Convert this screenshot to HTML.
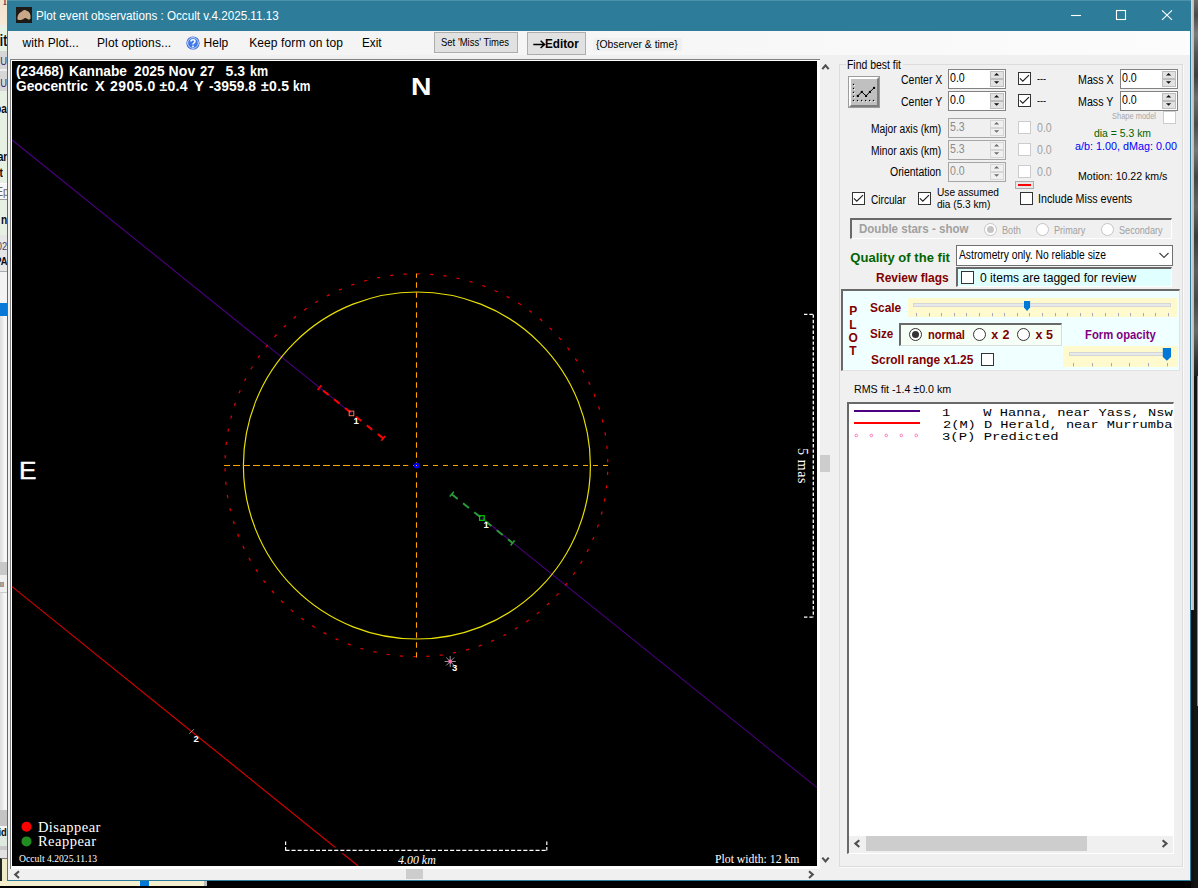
<!DOCTYPE html>
<html><head><meta charset="utf-8"><title>Plot event observations</title>
<style>
html,body{margin:0;padding:0}
body{width:1198px;height:888px;position:relative;overflow:hidden;background:#f0f0f0;font-family:"Liberation Sans",sans-serif}
body>div,body>span,body>svg{position:absolute;box-sizing:border-box}
.t{white-space:pre}

.cb{background:#fff;border:1px solid #333}
.cbd{background:#fff;border:1px solid #ccc}
.sunk{border-style:solid;border-width:2px 1px 1px 2px;border-color:#696969 #fff #fff #696969}
.spin{background:#fff;border:1px solid #7a7a7a}
.spind{background:#f0f0f0;border:1px solid #ababab}
</style></head>
<body>
<div style="left:0px;top:0px;width:7px;height:26px;background:linear-gradient(180deg,#f3e2cc,#f4ead8);"></div>
<div style="left:0px;top:25px;width:7px;height:2px;background:#ececec;"></div>
<div style="left:0px;top:27px;width:7px;height:24px;background:#e6f2e4;"></div>
<div style="left:0px;top:51px;width:7px;height:18px;background:#d6d6d6;"></div>
<div style="left:0px;top:69px;width:7px;height:2px;background:#eee;"></div>
<div style="left:0px;top:71px;width:7px;height:20px;background:#d6d6d6;"></div>
<div style="left:0px;top:91px;width:7px;height:92px;background:#e6f1e4;"></div>
<div style="left:0px;top:183px;width:7px;height:17px;background:#f6f6f6;border-top:1px solid #fff;border-bottom:1px solid #999;"></div>
<div style="left:0px;top:200px;width:7px;height:35px;background:#e6f1e4;"></div>
<div style="left:0px;top:235px;width:7px;height:37px;background:#e6e6e6;border-bottom:1px solid #aaa;"></div>
<div style="left:0px;top:272px;width:7px;height:31px;background:#f3f3f3;"></div>
<div style="left:0px;top:303px;width:7px;height:13px;background:#0a78d7;"></div>
<div style="left:0px;top:316px;width:7px;height:246px;background:linear-gradient(90deg,#dedede 0,#e6e6e6 30%,#f6f6f6 60%);"></div>
<div style="left:0px;top:562px;width:7px;height:13px;background:#c8c8c8;"></div>
<div style="left:0px;top:575px;width:7px;height:18px;background:#efefef;border-bottom:1px solid #ccc;"></div>
<div style="left:0px;top:593px;width:7px;height:217px;background:linear-gradient(90deg,#dedede 0,#e6e6e6 30%,#f6f6f6 60%);"></div>
<div style="left:0px;top:810px;width:7px;height:16px;background:#c4c4c4;"></div>
<div style="left:0px;top:826px;width:7px;height:3px;background:#f4f4f4;"></div>
<div style="left:0px;top:829px;width:7px;height:17px;background:#dfeadf;"></div>
<div style="left:0px;top:846px;width:7px;height:4px;background:#c8c8c8;"></div>
<div style="left:0px;top:850px;width:7px;height:8px;background:#e2e2e2;"></div>
<div style="left:0px;top:858px;width:7px;height:30px;background:#efebc9;border-left:2px solid #222;border-top:1px solid #777;"></div>
<div style="left:0;top:-6.4px;width:7px;height:13px;overflow:hidden"><span style='position:absolute;right:0px;top:0;white-space:pre;font:13px/1 "Liberation Serif", serif;color:#1a1a3a;transform-origin:100% 0;transform:scaleX(0.85)'>1</span></div>
<div style="left:0;top:31.6px;width:7px;height:16.5px;overflow:hidden"><span style='position:absolute;right:0px;top:0;white-space:pre;font:bold 16.5px/1 "Liberation Sans", sans-serif;color:#0a0a14;transform-origin:100% 0;transform:scaleX(0.72)'>it</span></div>
<div style="left:0;top:55.9px;width:7px;height:11px;overflow:hidden"><span style='position:absolute;right:0px;top:0;white-space:pre;font:11px/1 "Liberation Sans", sans-serif;color:#2a2a7a;transform-origin:100% 0;transform:scaleX(0.85)'>U</span></div>
<div style="left:0;top:77.9px;width:7px;height:11px;overflow:hidden"><span style='position:absolute;right:0px;top:0;white-space:pre;font:11px/1 "Liberation Sans", sans-serif;color:#2a2a7a;transform-origin:100% 0;transform:scaleX(0.85)'>U</span></div>
<div style="left:0;top:103.1px;width:7px;height:12px;overflow:hidden"><span style='position:absolute;right:0px;top:0;white-space:pre;font:bold 12px/1 "Liberation Sans", sans-serif;color:#0a0a14;transform-origin:100% 0;transform:scaleX(0.85)'>pa</span></div>
<div style="left:0;top:151.3px;width:7px;height:12px;overflow:hidden"><span style='position:absolute;right:0px;top:0;white-space:pre;font:bold 12px/1 "Liberation Sans", sans-serif;color:#0a0a14;transform-origin:100% 0;transform:scaleX(0.85)'>ar</span></div>
<div style="left:0;top:167.4px;width:7px;height:12px;overflow:hidden"><span style='position:absolute;right:4px;top:0;white-space:pre;font:bold 12px/1 "Liberation Sans", sans-serif;color:#2a0a00;transform-origin:100% 0;transform:scaleX(0.85)'>t</span></div>
<div style="left:0;top:185.8px;width:7px;height:12px;overflow:hidden"><span style='position:absolute;right:-2px;top:0;white-space:pre;font:12px/1 "Liberation Sans", sans-serif;color:#666;transform-origin:100% 0;transform:scaleX(0.85)'>Ep</span></div>
<div style="left:0;top:213.8px;width:7px;height:12px;overflow:hidden"><span style='position:absolute;right:0px;top:0;white-space:pre;font:bold 12px/1 "Liberation Sans", sans-serif;color:#0a0a14;transform-origin:100% 0;transform:scaleX(0.85)'>n</span></div>
<div style="left:0;top:240.9px;width:7px;height:11px;overflow:hidden"><span style='position:absolute;right:0px;top:0;white-space:pre;font:11px/1 "Liberation Sans", sans-serif;color:#445;transform-origin:100% 0;transform:scaleX(0.85)'>02</span></div>
<div style="left:0;top:255.9px;width:7px;height:11px;overflow:hidden"><span style='position:absolute;right:0px;top:0;white-space:pre;font:bold 11px/1 "Liberation Sans", sans-serif;color:#0a0a14;transform-origin:100% 0;transform:scaleX(0.85)'>PA</span></div>
<div style="left:0;top:826.7px;width:7px;height:11px;overflow:hidden"><span style='position:absolute;right:0px;top:0;white-space:pre;font:bold 11px/1 "Liberation Sans", sans-serif;color:#0a0a14;transform-origin:100% 0;transform:scaleX(0.85)'>id</span></div>
<div style="left:0px;top:582px;width:4px;height:5px;background:#c9a070;border:1px solid #999;"></div>
<div style="left:0px;top:881px;width:1198px;height:7px;background:#000;"></div>
<div style="left:0px;top:881px;width:204px;height:5px;background:#f3efcf;"></div>
<div style="left:140px;top:881px;width:9px;height:5px;background:#0078d7;"></div>
<div style="left:204px;top:881px;width:3px;height:5px;background:#bbb;"></div>
<div style="left:1191px;top:0px;width:3px;height:610px;background:linear-gradient(90deg,#d8d8d8,#b8b8b8);"></div>
<div style="left:1191px;top:610px;width:3px;height:278px;background:#101010;"></div>
<div style="left:1194px;top:0px;width:4px;height:376px;background:linear-gradient(180deg,#6a6a6a 0,#4a4a4a 4%,#7c7c7c 9%,#555 14%,#3e3e3e 20%,#6e6e6e 26%,#4c4c4c 33%,#777 40%,#444 47%,#666 55%,#3c3c3c 63%,#5e5e5e 72%,#484848 80%,#6a6a6a 88%,#333 96%,#222 100%);"></div>
<div style="left:1194px;top:376px;width:4px;height:512px;background:#141414;"></div>
<div style="left:1197px;top:376px;width:1px;height:330px;background:#8a8a8a;"></div>
<div style="left:7px;top:0px;width:1184px;height:881px;background:#f0f0f0;border:1px solid #2d7d9a;border-top:none;"></div>
<div style="left:7px;top:0px;width:1184px;height:31px;background:#2d7d9a;"></div>
<div style="left:7px;top:0px;width:1184px;height:1px;background:#4b91aa;"></div>
<svg style="left:16px;top:7px" width="16" height="16" viewBox="0 0 16 16"><rect width="16" height="16" fill="#1e1a17"/><path d="M1.5 12.5 C1 9 3 5.5 6 4.5 C7 3 9.5 2.5 11 4 C13.5 4.5 15 7.5 14.5 11 C14.5 12.5 13 13 11.5 12 C10 11 9 10.5 8 11.5 C6.5 13 4 13.5 1.5 12.5Z" fill="#c9a888"/></svg>
<span class="t" style='left:36.03px;top:9.64px;font:12px/1 "Liberation Sans", sans-serif;color:#fff;transform-origin:0 0;transform:scaleX(0.9719);'>Plot event observations : Occult v.4.2025.11.13</span>
<svg style="left:1060px;top:0" width="130" height="31" viewBox="1060 0 130 31" fill="none" stroke="#fff" stroke-width="1.1"><path d="M1071 15.5H1081"/><rect x="1116.5" y="10.5" width="9" height="9"/><path d="M1162 10.3L1172 19.8M1172 10.3L1162 19.8"/></svg>
<div style="left:8px;top:31px;width:1182px;height:24px;background:linear-gradient(90deg,#f2f2f2 0%,#f6f6f6 50%,#fcfcfc 100%);"></div>
<span class="t" style='left:22.50px;top:37.04px;font:12px/1 "Liberation Sans", sans-serif;color:#000;letter-spacing:0.091px;'>with Plot...</span>
<span class="t" style='left:97.00px;top:37.04px;font:12px/1 "Liberation Sans", sans-serif;color:#000;letter-spacing:0.107px;'>Plot options...</span>
<svg style="left:186px;top:36px" width="14" height="14" viewBox="0 0 14 14"><circle cx="7" cy="7" r="6.6" fill="#2a5fd0"/><circle cx="7" cy="7" r="5.4" fill="#3f7ae8" stroke="#dfe8ff" stroke-width="0.9"/><path d="M5 5.4C5 3.2 9 3.2 9 5.4C9 6.8 7 6.8 7 8.4" fill="none" stroke="#fff" stroke-width="1.5"/><circle cx="7" cy="10.4" r="0.9" fill="#fff"/></svg>
<span class="t" style='left:203.60px;top:37.04px;font:12px/1 "Liberation Sans", sans-serif;color:#000;'>Help</span>
<span class="t" style='left:249.20px;top:37.04px;font:12px/1 "Liberation Sans", sans-serif;color:#000;letter-spacing:0.107px;'>Keep form on top</span>
<span class="t" style='left:361.62px;top:37.04px;font:12px/1 "Liberation Sans", sans-serif;color:#000;transform-origin:0 0;transform:scaleX(0.9789);'>Exit</span>
<div style="left:434px;top:32px;width:84px;height:21px;background:#e1e1e1;border:1px solid #adadad;"></div>
<span class="t" style='left:441.00px;top:37.31px;font:10.5px/1 "Liberation Sans", sans-serif;color:#000;transform-origin:0 0;transform:scaleX(0.9040);'>Set &#x27;Miss&#x27; Times</span>
<div style="left:527px;top:32px;width:59px;height:23px;background:#e1e1e1;border:1px solid #adadad;"></div>
<svg style="left:532px;top:38px" width="15" height="12" viewBox="532 38 15 12" fill="none" stroke="#000" stroke-width="1.5"><path d="M533.3 44.4H544.4M540.6 40.8L544.6 44.4L540.6 48"/></svg>
<span class="t" style='left:544.80px;top:36.90px;font:bold 13px/1 "Liberation Sans", sans-serif;color:#000;transform-origin:0 0;transform:scaleX(0.9000);'>Editor</span>
<div style="left:593px;top:38px;width:89px;height:13px;background:#f0f0f0;"></div>
<span class="t" style='left:596.40px;top:39.09px;font:11px/1 "Liberation Sans", sans-serif;color:#000;transform-origin:0 0;transform:scaleX(0.9402);'>{Observer &amp; time}</span>
<div style="left:10px;top:59px;width:810px;height:810px;background:#fff;border-left:1px solid #808080;border-top:1px solid #808080;"></div>
<div style="left:12px;top:61px;width:805px;height:805px;background:#000;"></div>
<div style="left:820px;top:59px;width:14px;height:810px;background:#f0f0f0;"></div>
<div style="left:820px;top:455px;width:10px;height:17px;background:#cdcdcd;"></div>
<div style="left:10px;top:869px;width:810px;height:11px;background:#f0f0f0;"></div>
<div style="left:406px;top:869px;width:17px;height:10px;background:#cdcdcd;"></div>
<svg style="left:8px;top:59px" width="830" height="822" viewBox="8 59 830 822" fill="none" stroke="#505050" stroke-width="2.1"><path d="M822.3 69.2L825.5 65.3L828.7 69.2"/><path d="M822.3 857.6L825.5 861.4L828.7 857.6"/><path d="M19 871.2L15.2 874.6L19 878"/><path d="M809 871.2L812.8 874.6L809 878"/></svg>
<svg style="left:12px;top:61px" width="805" height="805" viewBox="12 61 805 805" fill="none"><path d="M12 140.0L351.5 413.4M482 518L817 787.6" stroke="#4b0082" stroke-width="1.05"/><path d="M12 586.6L358.2 866" stroke="#d40000" stroke-width="1.2"/><circle cx="416.9" cy="465.5" r="173.5" stroke="#e8e000" stroke-width="1.2"/><circle cx="416.4" cy="465.2" r="191.4" stroke="#e00000" stroke-width="1.25" stroke-dasharray="3.2 10.162" stroke-dashoffset="-6.7"/><path d="M224 465.5H608" stroke="#ffa500" stroke-width="1.1" stroke-dasharray="5 5" stroke-dashoffset="1"/><path d="M224 465.5H408.2" stroke="#ffa500" stroke-width="1.1" stroke-dasharray="5 5" stroke-dashoffset="9"/><path d="M416.5 273.5V657.5" stroke="#ffa500" stroke-width="1.1" stroke-dasharray="5.4 4.6" stroke-dashoffset="1.2"/><circle cx="416.6" cy="465.6" r="2.9" fill="#0000ff"/><rect x="416" y="465" width="1.1" height="1.1" fill="#ffa500"/><path d="M383.2 438.4L319.5 387.7" stroke="#ff0000" stroke-width="2" stroke-dasharray="7 6.95"/><path d="M317.6 390L321.4 385.3M381.2 440.8L385.2 436" stroke="#ff0000" stroke-width="1.6"/><rect x="349.2" y="411.1" width="4.6" height="4.6" stroke="#ff7050" stroke-width="1"/><path d="M451.8 494.3L512.6 543" stroke="#2a9a38" stroke-width="2" stroke-dasharray="7.6 6.8"/><path d="M449.8 496.6L453.8 491.8M510.6 545.4L514.6 540.6" stroke="#2a9a38" stroke-width="1.6"/><rect x="479.6" y="515.7" width="4.6" height="4.6" stroke="#00d000" stroke-width="1.2"/><path d="M451.7 661.5L455.8 661.5M451.3 662.6L454.2 665.5M450.2 663.0L450.2 667.1M449.1 662.6L446.2 665.5M448.7 661.5L444.6 661.5M449.1 660.4L446.2 657.5M450.2 660.0L450.2 655.9M451.3 660.4L454.2 657.5" stroke="#a8a8a8" stroke-width="0.9"/><circle cx="450.2" cy="661.5" r="1.9" fill="#ff69b4"/><path d="M189.3 733.8L193.9 729.2" stroke="#909090" stroke-width="1"/><rect x="283" y="847.6" width="266" height="5.6" fill="#000"/><path d="M813.3 314.4V617.2" stroke="#fff" stroke-width="1.3" stroke-dasharray="3.4 2"/><path d="M804 314.4H813.3M804 617.2H813.3" stroke="#fff" stroke-width="1.2" stroke-dasharray="3.4 2"/><path d="M285.4 850.4H546.9" stroke="#fff" stroke-width="1.3" stroke-dasharray="4.1 2"/><path d="M285.6 850.4V841M546.8 850.4V841" stroke="#fff" stroke-width="1.2" stroke-dasharray="3.4 2"/><circle cx="26.5" cy="826.7" r="5" fill="#ff0000"/><circle cx="26.5" cy="841.4" r="5" fill="#228b22"/></svg>
<span class="t" style='left:15.60px;top:64.15px;font:bold 14px/1 "Liberation Sans", sans-serif;color:#fff;transform-origin:0 0;transform:scaleX(0.9875);'>(23468)</span>
<span class="t" style='left:68.52px;top:64.15px;font:bold 14px/1 "Liberation Sans", sans-serif;color:#fff;transform-origin:0 0;transform:scaleX(0.9793);'>Kannabe</span>
<span class="t" style='left:134.20px;top:64.15px;font:bold 14px/1 "Liberation Sans", sans-serif;color:#fff;transform-origin:0 0;transform:scaleX(0.9806);'>2025</span>
<span class="t" style='left:168.40px;top:64.15px;font:bold 14px/1 "Liberation Sans", sans-serif;color:#fff;letter-spacing:0.200px;'>Nov</span>
<span class="t" style='left:199.50px;top:64.15px;font:bold 14px/1 "Liberation Sans", sans-serif;color:#fff;transform-origin:0 0;transform:scaleX(0.9267);'>27</span>
<span class="t" style='left:225.60px;top:64.15px;font:bold 14px/1 "Liberation Sans", sans-serif;color:#fff;'>5.3</span>
<span class="t" style='left:250.31px;top:64.15px;font:bold 14px/1 "Liberation Sans", sans-serif;color:#fff;transform-origin:0 0;transform:scaleX(0.8947);'>km</span>
<span class="t" style='left:15.60px;top:79.45px;font:bold 14px/1 "Liberation Sans", sans-serif;color:#fff;transform-origin:0 0;transform:scaleX(0.9836);'>Geocentric</span>
<span class="t" style='left:95.00px;top:79.45px;font:bold 14px/1 "Liberation Sans", sans-serif;color:#fff;transform-origin:0 0;transform:scaleX(1.0444);'>X</span>
<span class="t" style='left:110.00px;top:79.45px;font:bold 14px/1 "Liberation Sans", sans-serif;color:#fff;letter-spacing:0.500px;'>2905.0</span>
<span class="t" style='left:159.50px;top:79.45px;font:bold 14px/1 "Liberation Sans", sans-serif;color:#fff;letter-spacing:0.267px;'>±0.4</span>
<span class="t" style='left:194.40px;top:79.45px;font:bold 14px/1 "Liberation Sans", sans-serif;color:#fff;transform-origin:0 0;transform:scaleX(1.0444);'>Y</span>
<span class="t" style='left:209.20px;top:79.45px;font:bold 14px/1 "Liberation Sans", sans-serif;color:#fff;transform-origin:0 0;transform:scaleX(0.9917);'>-3959.8</span>
<span class="t" style='left:261.00px;top:79.45px;font:bold 14px/1 "Liberation Sans", sans-serif;color:#fff;letter-spacing:0.333px;'>±0.5</span>
<span class="t" style='left:292.84px;top:79.45px;font:bold 14px/1 "Liberation Sans", sans-serif;color:#fff;transform-origin:0 0;transform:scaleX(0.8579);'>km</span>
<span class="t" style='left:410.52px;top:74.68px;font:bold 24px/1 "Liberation Sans", sans-serif;color:#fff;transform-origin:0 0;transform:scaleX(1.1800);'>N</span>
<span class="t" style='left:18.81px;top:458.68px;font:24px/1 "Liberation Sans", sans-serif;color:#fff;transform-origin:0 0;transform:scaleX(1.0867);-webkit-text-stroke:0.45px #fff;'>E</span>
<span class="t" style='left:353.60px;top:416.16px;font:bold 9.5px/1 "Liberation Sans", sans-serif;color:#fff;'>1</span>
<span class="t" style='left:483.60px;top:520.46px;font:bold 9.5px/1 "Liberation Sans", sans-serif;color:#fff;'>1</span>
<span class="t" style='left:452.00px;top:663.26px;font:bold 9.5px/1 "Liberation Sans", sans-serif;color:#fff;'>3</span>
<span class="t" style='left:193.40px;top:733.96px;font:bold 9.5px/1 "Liberation Sans", sans-serif;color:#fff;'>2</span>
<span class="t" style='left:37.90px;top:819.76px;font:14.5px/1 "Liberation Serif", serif;color:#fff;letter-spacing:0.463px;'>Disappear</span>
<span class="t" style='left:37.90px;top:834.46px;font:14.5px/1 "Liberation Serif", serif;color:#fff;letter-spacing:0.500px;'>Reappear</span>
<span class="t" style='left:19.30px;top:853.71px;font:10.5px/1 "Liberation Serif", serif;color:#fff;transform-origin:0 0;transform:scaleX(0.9153);'>Occult 4.2025.11.13</span>
<span class="t" style='left:398.20px;top:852.91px;font:italic 13px/1 "Liberation Serif", serif;color:#fff;transform-origin:0 0;transform:scaleX(0.9171);'>4.00 km</span>
<span class="t" style='left:715.10px;top:853.13px;font:12.5px/1 "Liberation Serif", serif;color:#fff;transform-origin:0 0;transform:scaleX(0.9389);'>Plot width: 12 km</span>
<span class="t" style='left:808.93px;top:447.60px;font:14px/1 "Liberation Serif", serif;color:#fff;letter-spacing:0.600px;transform-origin:0 0;transform:rotate(90deg);'>5 mas</span>
<div style="left:839px;top:64px;width:344px;height:803px;border:1px solid #dcdcdc;box-shadow:1px 1px 0 #fafafa;"></div>
<div style="left:846px;top:58px;width:57px;height:14px;background:#f0f0f0;"></div>
<span class="t" style='left:847.13px;top:59.04px;font:12px/1 "Liberation Sans", sans-serif;color:#000;transform-origin:0 0;transform:scaleX(0.8689);'>Find best fit</span>
<div style="left:848px;top:76px;width:32px;height:32px;background:#c0c0c0;border:1px solid #9c9c9c;"><div style="width:30px;height:30px;box-sizing:border-box;border-style:solid;border-width:2px;border-color:#fff #7e7e7e #7e7e7e #fff"></div></div>
<svg style="left:848px;top:76px" width="32" height="32" viewBox="0 0 32 32"><rect x="5.5" y="8.4" width="1.5" height="1.5" fill="#fff"/><rect x="4.9" y="7.8" width="1.3" height="1.3" fill="#000"/><rect x="5.5" y="12.4" width="1.5" height="1.5" fill="#fff"/><rect x="4.9" y="11.8" width="1.3" height="1.3" fill="#000"/><rect x="5.5" y="16.3" width="1.5" height="1.5" fill="#fff"/><rect x="4.9" y="15.7" width="1.3" height="1.3" fill="#000"/><rect x="5.5" y="20.4" width="1.5" height="1.5" fill="#fff"/><rect x="4.9" y="19.8" width="1.3" height="1.3" fill="#000"/><rect x="5.5" y="24.5" width="1.5" height="1.5" fill="#fff"/><rect x="4.9" y="23.9" width="1.3" height="1.3" fill="#000"/><rect x="9.5" y="24.5" width="1.5" height="1.5" fill="#fff"/><rect x="8.9" y="23.9" width="1.3" height="1.3" fill="#000"/><rect x="13.6" y="24.5" width="1.5" height="1.5" fill="#fff"/><rect x="13.0" y="23.9" width="1.3" height="1.3" fill="#000"/><rect x="17.6" y="24.5" width="1.5" height="1.5" fill="#fff"/><rect x="17.0" y="23.9" width="1.3" height="1.3" fill="#000"/><rect x="21.6" y="24.5" width="1.5" height="1.5" fill="#fff"/><rect x="21.0" y="23.9" width="1.3" height="1.3" fill="#000"/><rect x="25.5" y="24.5" width="1.5" height="1.5" fill="#fff"/><rect x="24.9" y="23.9" width="1.3" height="1.3" fill="#000"/><path d="M9.8 19.9L13.8 15.9L18 19.9L21.9 15.9L26 11.9" fill="none" stroke="#000" stroke-width="1"/><rect x="8.8" y="18.9" width="2.1" height="2.1" fill="#000"/><rect x="12.8" y="14.9" width="2.1" height="2.1" fill="#000"/><rect x="17.0" y="18.9" width="2.1" height="2.1" fill="#000"/><rect x="20.9" y="14.9" width="2.1" height="2.1" fill="#000"/><rect x="25.0" y="10.9" width="2.1" height="2.1" fill="#000"/></svg>
<span class="t" style='left:900.50px;top:73.64px;font:12px/1 "Liberation Sans", sans-serif;color:#000;transform-origin:0 0;transform:scaleX(0.8723);'>Center X</span>
<div style="left:948px;top:69.3px;width:58px;height:19.6px;background:#fff;border:1px solid #828282;"></div>
<span class="t" style='left:950.20px;top:72.44px;font:12px/1 "Liberation Sans", sans-serif;color:#000;transform-origin:0 0;transform:scaleX(0.8824);'>0.0</span>
<div style="left:990.1px;top:71.0px;width:13.5px;height:15.8px;background:#e2e2e2;border:1px solid #bdbdbd;"></div>
<div style="left:990.1px;top:78.0px;width:13.5px;height:2px;background:#bdbdbd;"></div>
<svg style="left:990.1px;top:69.3px" width="14" height="20" viewBox="0 0 14 20"><path d="M4 6.4L6.6 3.9L9.2 6.4Z M4 12.2L6.6 14.7L9.2 12.2Z" fill="#111"/></svg>
<span class="t" style='left:900.50px;top:95.64px;font:12px/1 "Liberation Sans", sans-serif;color:#000;transform-origin:0 0;transform:scaleX(0.8723);'>Center Y</span>
<div style="left:948px;top:91.2px;width:58px;height:19.6px;background:#fff;border:1px solid #828282;"></div>
<span class="t" style='left:950.20px;top:94.34px;font:12px/1 "Liberation Sans", sans-serif;color:#000;transform-origin:0 0;transform:scaleX(0.8824);'>0.0</span>
<div style="left:990.1px;top:92.9px;width:13.5px;height:15.8px;background:#e2e2e2;border:1px solid #bdbdbd;"></div>
<div style="left:990.1px;top:99.9px;width:13.5px;height:2px;background:#bdbdbd;"></div>
<svg style="left:990.1px;top:91.2px" width="14" height="20" viewBox="0 0 14 20"><path d="M4 6.4L6.6 3.9L9.2 6.4Z M4 12.2L6.6 14.7L9.2 12.2Z" fill="#111"/></svg>
<span class="t" style='left:871.14px;top:123.24px;font:12px/1 "Liberation Sans", sans-serif;color:#000;transform-origin:0 0;transform:scaleX(0.8556);'>Major axis (km)</span>
<div style="left:948px;top:118.2px;width:58px;height:19.6px;background:#f0f0f0;border:1px solid #a6a6a6;"></div>
<span class="t" style='left:950.20px;top:121.34px;font:12px/1 "Liberation Sans", sans-serif;color:#8c8c8c;transform-origin:0 0;transform:scaleX(0.8824);'>5.3</span>
<div style="left:990.1px;top:119.9px;width:13.5px;height:15.8px;background:#f0f0f0;border:1px solid #d6d6d6;"></div>
<div style="left:990.1px;top:126.9px;width:13.5px;height:2px;background:#d6d6d6;"></div>
<svg style="left:990.1px;top:118.2px" width="14" height="20" viewBox="0 0 14 20"><path d="M4 6.4L6.6 3.9L9.2 6.4Z M4 12.2L6.6 14.7L9.2 12.2Z" fill="#6e6e6e"/></svg>
<span class="t" style='left:871.14px;top:145.34px;font:12px/1 "Liberation Sans", sans-serif;color:#000;transform-origin:0 0;transform:scaleX(0.8556);'>Minor axis (km)</span>
<div style="left:948px;top:140.3px;width:58px;height:19.6px;background:#f0f0f0;border:1px solid #a6a6a6;"></div>
<span class="t" style='left:950.20px;top:143.44px;font:12px/1 "Liberation Sans", sans-serif;color:#8c8c8c;transform-origin:0 0;transform:scaleX(0.8824);'>5.3</span>
<div style="left:990.1px;top:142.0px;width:13.5px;height:15.8px;background:#f0f0f0;border:1px solid #d6d6d6;"></div>
<div style="left:990.1px;top:149.0px;width:13.5px;height:2px;background:#d6d6d6;"></div>
<svg style="left:990.1px;top:140.3px" width="14" height="20" viewBox="0 0 14 20"><path d="M4 6.4L6.6 3.9L9.2 6.4Z M4 12.2L6.6 14.7L9.2 12.2Z" fill="#6e6e6e"/></svg>
<span class="t" style='left:890.30px;top:166.34px;font:12px/1 "Liberation Sans", sans-serif;color:#000;transform-origin:0 0;transform:scaleX(0.8707);'>Orientation</span>
<div style="left:948px;top:162.3px;width:58px;height:19.6px;background:#f0f0f0;border:1px solid #a6a6a6;"></div>
<span class="t" style='left:950.20px;top:165.44px;font:12px/1 "Liberation Sans", sans-serif;color:#8c8c8c;transform-origin:0 0;transform:scaleX(0.8824);'>0.0</span>
<div style="left:990.1px;top:164.0px;width:13.5px;height:15.8px;background:#f0f0f0;border:1px solid #d6d6d6;"></div>
<div style="left:990.1px;top:171.0px;width:13.5px;height:2px;background:#d6d6d6;"></div>
<svg style="left:990.1px;top:162.3px" width="14" height="20" viewBox="0 0 14 20"><path d="M4 6.4L6.6 3.9L9.2 6.4Z M4 12.2L6.6 14.7L9.2 12.2Z" fill="#6e6e6e"/></svg>
<div class="cb" style="left:1018px;top:72px;width:13px;height:13px"><svg width="11" height="11" viewBox="0 0 11 11" style="display:block"><path d="M0.9 5.4L3.8 8.2L10 2.1" fill="none" stroke="#222" stroke-width="1.2"/></svg></div>
<span class="t" style='left:1037.00px;top:73.19px;font:11px/1 "Liberation Sans", sans-serif;color:#000;transform-origin:0 0;transform:scaleX(0.8182);'>---</span>
<div class="cb" style="left:1018px;top:94px;width:13px;height:13px"><svg width="11" height="11" viewBox="0 0 11 11" style="display:block"><path d="M0.9 5.4L3.8 8.2L10 2.1" fill="none" stroke="#222" stroke-width="1.2"/></svg></div>
<span class="t" style='left:1037.00px;top:95.19px;font:11px/1 "Liberation Sans", sans-serif;color:#000;transform-origin:0 0;transform:scaleX(0.8182);'>---</span>
<div class="cbd" style="left:1018px;top:121px;width:13px;height:13px"></div>
<span class="t" style='left:1037.00px;top:122.24px;font:12px/1 "Liberation Sans", sans-serif;color:#a0a0a0;transform-origin:0 0;transform:scaleX(0.8824);'>0.0</span>
<div class="cbd" style="left:1018px;top:143px;width:13px;height:13px"></div>
<span class="t" style='left:1037.00px;top:144.24px;font:12px/1 "Liberation Sans", sans-serif;color:#a0a0a0;transform-origin:0 0;transform:scaleX(0.8824);'>0.0</span>
<div class="cbd" style="left:1018px;top:165px;width:13px;height:13px"></div>
<span class="t" style='left:1037.00px;top:166.24px;font:12px/1 "Liberation Sans", sans-serif;color:#a0a0a0;transform-origin:0 0;transform:scaleX(0.8824);'>0.0</span>
<span class="t" style='left:1078.41px;top:73.64px;font:12px/1 "Liberation Sans", sans-serif;color:#000;transform-origin:0 0;transform:scaleX(0.8897);'>Mass X</span>
<div style="left:1120px;top:69.3px;width:58px;height:19.6px;background:#fff;border:1px solid #828282;"></div>
<span class="t" style='left:1122.20px;top:72.44px;font:12px/1 "Liberation Sans", sans-serif;color:#000;transform-origin:0 0;transform:scaleX(0.8824);'>0.0</span>
<div style="left:1162.1px;top:71.0px;width:13.5px;height:15.8px;background:#e2e2e2;border:1px solid #bdbdbd;"></div>
<div style="left:1162.1px;top:78.0px;width:13.5px;height:2px;background:#bdbdbd;"></div>
<svg style="left:1162.1px;top:69.3px" width="14" height="20" viewBox="0 0 14 20"><path d="M4 6.4L6.6 3.9L9.2 6.4Z M4 12.2L6.6 14.7L9.2 12.2Z" fill="#111"/></svg>
<span class="t" style='left:1078.41px;top:95.64px;font:12px/1 "Liberation Sans", sans-serif;color:#000;transform-origin:0 0;transform:scaleX(0.8897);'>Mass Y</span>
<div style="left:1120px;top:91.2px;width:58px;height:19.6px;background:#fff;border:1px solid #828282;"></div>
<span class="t" style='left:1122.20px;top:94.34px;font:12px/1 "Liberation Sans", sans-serif;color:#000;transform-origin:0 0;transform:scaleX(0.8824);'>0.0</span>
<div style="left:1162.1px;top:92.9px;width:13.5px;height:15.8px;background:#e2e2e2;border:1px solid #bdbdbd;"></div>
<div style="left:1162.1px;top:99.9px;width:13.5px;height:2px;background:#bdbdbd;"></div>
<svg style="left:1162.1px;top:91.2px" width="14" height="20" viewBox="0 0 14 20"><path d="M4 6.4L6.6 3.9L9.2 6.4Z M4 12.2L6.6 14.7L9.2 12.2Z" fill="#111"/></svg>
<span class="t" style='left:1112.00px;top:112.28px;font:9px/1 "Liberation Sans", sans-serif;color:#a8a8a8;transform-origin:0 0;transform:scaleX(0.8302);'>Shape model</span>
<div class="cbd" style="left:1163px;top:111px;width:13px;height:13px"></div>
<span class="t" style='left:1093.90px;top:127.59px;font:11px/1 "Liberation Sans", sans-serif;color:#006400;transform-origin:0 0;transform:scaleX(0.9467);'>dia = 5.3 km</span>
<span class="t" style='left:1074.90px;top:141.29px;font:11px/1 "Liberation Sans", sans-serif;color:#0000ff;transform-origin:0 0;transform:scaleX(0.9808);'>a/b: 1.00, dMag: 0.00</span>
<span class="t" style='left:1078.34px;top:171.19px;font:11px/1 "Liberation Sans", sans-serif;color:#000;transform-origin:0 0;transform:scaleX(0.9620);'>Motion: 10.22 km/s</span>
<div style="left:1015px;top:181px;width:19px;height:8px;background:#e8e8e8;border:1px solid #adadad;"></div>
<div style="left:1018px;top:184px;width:13px;height:2px;background:#f00;"></div>
<div class="cb" style="left:852px;top:192px;width:13px;height:13px"><svg width="11" height="11" viewBox="0 0 11 11" style="display:block"><path d="M0.9 5.4L3.8 8.2L10 2.1" fill="none" stroke="#222" stroke-width="1.2"/></svg></div>
<span class="t" style='left:870.50px;top:193.64px;font:12px/1 "Liberation Sans", sans-serif;color:#000;transform-origin:0 0;transform:scaleX(0.8405);'>Circular</span>
<div class="cb" style="left:918px;top:192px;width:13px;height:13px"><svg width="11" height="11" viewBox="0 0 11 11" style="display:block"><path d="M0.9 5.4L3.8 8.2L10 2.1" fill="none" stroke="#222" stroke-width="1.2"/></svg></div>
<span class="t" style='left:937.00px;top:187.29px;font:11px/1 "Liberation Sans", sans-serif;color:#000;transform-origin:0 0;transform:scaleX(0.9209);'>Use assumed</span>
<span class="t" style='left:937.00px;top:199.49px;font:11px/1 "Liberation Sans", sans-serif;color:#000;transform-origin:0 0;transform:scaleX(0.9190);'>dia (5.3 km)</span>
<div class="cb" style="left:1020px;top:192px;width:13px;height:13px"></div>
<span class="t" style='left:1038.11px;top:193.24px;font:12px/1 "Liberation Sans", sans-serif;color:#000;transform-origin:0 0;transform:scaleX(0.8942);'>Include Miss events</span>
<div style="left:850px;top:218px;width:322px;height:21px;background:#f0f0f0;border-style:solid;border-width:2px 1px 1px 2px;border-color:#696969 #fff #fff #696969;"></div>
<span class="t" style='left:859.30px;top:222.76px;font:bold 12.8px/1 "Liberation Sans", sans-serif;color:#a0a0a0;transform-origin:0 0;transform:scaleX(0.9000);'>Double stars - show</span>
<div style="left:983.5px;top:223.0px;width:13px;height:13px;border-radius:50%;border:1px solid #c4c4c4;background:#fff"><div style="position:absolute;left:2px;top:2px;width:7px;height:7px;border-radius:50%;background:#c4c4c4"></div></div>
<span class="t" style='left:1001.70px;top:225.94px;font:10px/1 "Liberation Sans", sans-serif;color:#a0a0a0;transform-origin:0 0;transform:scaleX(0.9150);'>Both</span>
<div style="left:1035.5px;top:223.0px;width:13px;height:13px;border-radius:50%;border:1px solid #c4c4c4;background:#fff"></div>
<span class="t" style='left:1053.70px;top:225.94px;font:10px/1 "Liberation Sans", sans-serif;color:#a0a0a0;transform-origin:0 0;transform:scaleX(0.9114);'>Primary</span>
<div style="left:1100.9px;top:223.0px;width:13px;height:13px;border-radius:50%;border:1px solid #c4c4c4;background:#fff"></div>
<span class="t" style='left:1119.00px;top:225.94px;font:10px/1 "Liberation Sans", sans-serif;color:#a0a0a0;transform-origin:0 0;transform:scaleX(0.9125);'>Secondary</span>
<span class="t" style='left:850.30px;top:250.90px;font:bold 13px/1 "Liberation Sans", sans-serif;color:#006400;letter-spacing:0.041px;'>Quality of the fit</span>
<div style="left:956px;top:245px;width:217px;height:21px;background:#fff;border:1px solid #707070;"></div>
<span class="t" style='left:959.00px;top:249.14px;font:12px/1 "Liberation Sans", sans-serif;color:#000;transform-origin:0 0;transform:scaleX(0.8585);'>Astrometry only. No reliable size</span>
<svg style="left:1158px;top:251px" width="12" height="9" viewBox="0 0 12 9"><path d="M1.5 2L6 6.5L10.5 2" fill="none" stroke="#444" stroke-width="1.2"/></svg>
<span class="t" style='left:875.78px;top:271.10px;font:bold 13px/1 "Liberation Sans", sans-serif;color:#800000;transform-origin:0 0;transform:scaleX(0.9231);'>Review flags</span>
<div style="left:956px;top:267px;width:216px;height:20px;background:#e0ffff;border-style:solid;border-width:2px 1px 1px 2px;border-color:#696969 #fff #fff #696969;"></div>
<div class="cb" style="left:961px;top:271px;width:13px;height:13px"></div>
<span class="t" style='left:980.00px;top:271.72px;font:12.5px/1 "Liberation Sans", sans-serif;color:#000;transform-origin:0 0;transform:scaleX(0.9691);'>0 items are tagged for review</span>
<div style="left:841px;top:289px;width:339px;height:82px;background:#f0ffff;border-style:solid;border-width:2px 1px 1px 2px;border-color:#696969 #e2e2e2 #e2e2e2 #696969;"></div>
<span class="t" style='left:849.20px;top:305.34px;font:bold 12px/1 "Liberation Sans", sans-serif;color:#800000;'>P</span>
<span class="t" style='left:849.20px;top:318.54px;font:bold 12px/1 "Liberation Sans", sans-serif;color:#800000;'>L</span>
<span class="t" style='left:848.60px;top:331.54px;font:bold 12px/1 "Liberation Sans", sans-serif;color:#800000;'>O</span>
<span class="t" style='left:849.20px;top:344.54px;font:bold 12px/1 "Liberation Sans", sans-serif;color:#800000;'>T</span>
<span class="t" style='left:869.50px;top:300.77px;font:bold 13.5px/1 "Liberation Sans", sans-serif;color:#800000;transform-origin:0 0;transform:scaleX(0.8857);'>Scale</span>
<div style="left:908px;top:298px;width:269px;height:19px;background:#fffacd;"></div>
<div style="left:913px;top:303px;width:258px;height:4px;background:#e7eaea;border:1px solid #d6d6d6;"></div>
<svg style="left:908px;top:298px" width="269" height="19" viewBox="908 298 269 19"><g fill="#aaaab6"><rect x="916" y="313" width="1" height="3.3"/><rect x="929" y="313" width="1" height="3.3"/><rect x="941" y="313" width="1" height="3.3"/><rect x="954" y="313" width="1" height="3.3"/><rect x="966" y="313" width="1" height="3.3"/><rect x="979" y="313" width="1" height="3.3"/><rect x="992" y="313" width="1" height="3.3"/><rect x="1004" y="313" width="1" height="3.3"/><rect x="1017" y="313" width="1" height="3.3"/><rect x="1029" y="313" width="1" height="3.3"/><rect x="1042" y="313" width="1" height="3.3"/><rect x="1055" y="313" width="1" height="3.3"/><rect x="1067" y="313" width="1" height="3.3"/><rect x="1080" y="313" width="1" height="3.3"/><rect x="1092" y="313" width="1" height="3.3"/><rect x="1105" y="313" width="1" height="3.3"/><rect x="1118" y="313" width="1" height="3.3"/><rect x="1130" y="313" width="1" height="3.3"/><rect x="1143" y="313" width="1" height="3.3"/><rect x="1155" y="313" width="1" height="3.3"/><rect x="1168" y="313" width="1" height="3.3"/></g><path d="M1024 301H1030.1V307.6L1027.05 310.9L1024 307.6Z" fill="#0078d7"/></svg>
<span class="t" style='left:869.50px;top:327.37px;font:bold 13.5px/1 "Liberation Sans", sans-serif;color:#800000;transform-origin:0 0;transform:scaleX(0.8630);'>Size</span>
<div style="left:899px;top:323px;width:163px;height:23px;background:#f5fff5;border-style:solid;border-width:2px 1px 1px 2px;border-color:#696969 #dcdcdc #dcdcdc #696969;"></div>
<div style="left:908.8px;top:328.0px;width:13px;height:13px;border-radius:50%;border:1px solid #333;background:#fff"><div style="position:absolute;left:2px;top:2px;width:7px;height:7px;border-radius:50%;background:#333"></div></div>
<span class="t" style='left:927.50px;top:328.52px;font:bold 12.5px/1 "Liberation Sans", sans-serif;color:#800000;transform-origin:0 0;transform:scaleX(0.8854);'>normal</span>
<div style="left:972.7px;top:328.0px;width:13px;height:13px;border-radius:50%;border:1px solid #333;background:#fff"></div>
<span class="t" style='left:991.30px;top:328.52px;font:bold 12.5px/1 "Liberation Sans", sans-serif;color:#800000;letter-spacing:0.450px;'>x 2</span>
<div style="left:1017.1px;top:328.0px;width:13px;height:13px;border-radius:50%;border:1px solid #333;background:#fff"></div>
<span class="t" style='left:1035.50px;top:328.52px;font:bold 12.5px/1 "Liberation Sans", sans-serif;color:#800000;letter-spacing:0.100px;'>x 5</span>
<span class="t" style='left:1084.60px;top:328.64px;font:bold 12px/1 "Liberation Sans", sans-serif;color:#800080;transform-origin:0 0;transform:scaleX(0.9382);'>Form opacity</span>
<span class="t" style='left:870.50px;top:353.17px;font:bold 13.5px/1 "Liberation Sans", sans-serif;color:#800000;transform-origin:0 0;transform:scaleX(0.8862);'>Scroll range x1.25</span>
<div class="cb" style="left:981px;top:353px;width:13px;height:13px"></div>
<div style="left:1063px;top:346px;width:115px;height:21px;background:#fffacd;"></div>
<div style="left:1069px;top:352px;width:101px;height:4px;background:#e7eaea;border:1px solid #d6d6d6;"></div>
<svg style="left:1063px;top:346px" width="115" height="21" viewBox="1063 346 115 21"><g fill="#aaaab6"><rect x="1073" y="363" width="1" height="3.4"/><rect x="1092" y="363" width="1" height="3.4"/><rect x="1111" y="363" width="1" height="3.4"/><rect x="1129" y="363" width="1" height="3.4"/><rect x="1148" y="363" width="1" height="3.4"/><rect x="1167" y="363" width="1" height="3.4"/></g><path d="M1162.8 348H1171V357L1166.9 360.8L1162.8 357Z" fill="#0078d7"/></svg>
<span class="t" style='left:854.03px;top:383.89px;font:11px/1 "Liberation Sans", sans-serif;color:#000;transform-origin:0 0;transform:scaleX(0.9697);'>RMS fit -1.4 ±0.0 km</span>
<div style="left:847px;top:402px;width:327px;height:452px;background:#fff;border-style:solid;border-width:2px 1px 1px 2px;border-color:#696969 #fff #fff #696969;"></div>
<div style="left:854px;top:410px;width:66px;height:2px;background:#4b0082;"></div>
<div style="left:854px;top:422px;width:66px;height:2px;background:#ff0000;"></div>
<svg style="left:850px;top:430px" width="80" height="12" viewBox="850 430 80 12" fill="none" stroke="#ff69b4" stroke-width="0.9"><circle cx="856.3" cy="435.5" r="1.3"/><circle cx="871.3" cy="435.5" r="1.3"/><circle cx="886.3" cy="435.5" r="1.3"/><circle cx="901.3" cy="435.5" r="1.3"/><circle cx="916.3" cy="435.5" r="1.3"/></svg>
<span class="t" style='left:942.05px;top:407.57px;font:11px/1 "Liberation Mono", monospace;color:#000;transform-origin:0 0;transform:scaleX(1.2478);'>1    W Hanna, near Yass, Nsw</span>
<span class="t" style='left:943.30px;top:419.67px;font:11px/1 "Liberation Mono", monospace;color:#000;transform-origin:0 0;transform:scaleX(1.2411);'>2(M) D Herald, near Murrumba</span>
<span class="t" style='left:942.04px;top:431.77px;font:11px/1 "Liberation Mono", monospace;color:#000;transform-origin:0 0;transform:scaleX(1.2615);'>3(P) Predicted</span>
<div style="left:849px;top:836px;width:324px;height:16.5px;background:#f0f0f0;"></div>
<div style="left:866px;top:836px;width:221px;height:15px;background:#cdcdcd;"></div>
<svg style="left:849px;top:836px" width="324" height="17" viewBox="849 836 324 17" fill="none" stroke="#505050" stroke-width="2.1"><path d="M859.3 840.3L855.4 843.6L859.3 847"/><path d="M1162.6 840.3L1166.5 843.6L1162.6 847"/></svg>
</body></html>
